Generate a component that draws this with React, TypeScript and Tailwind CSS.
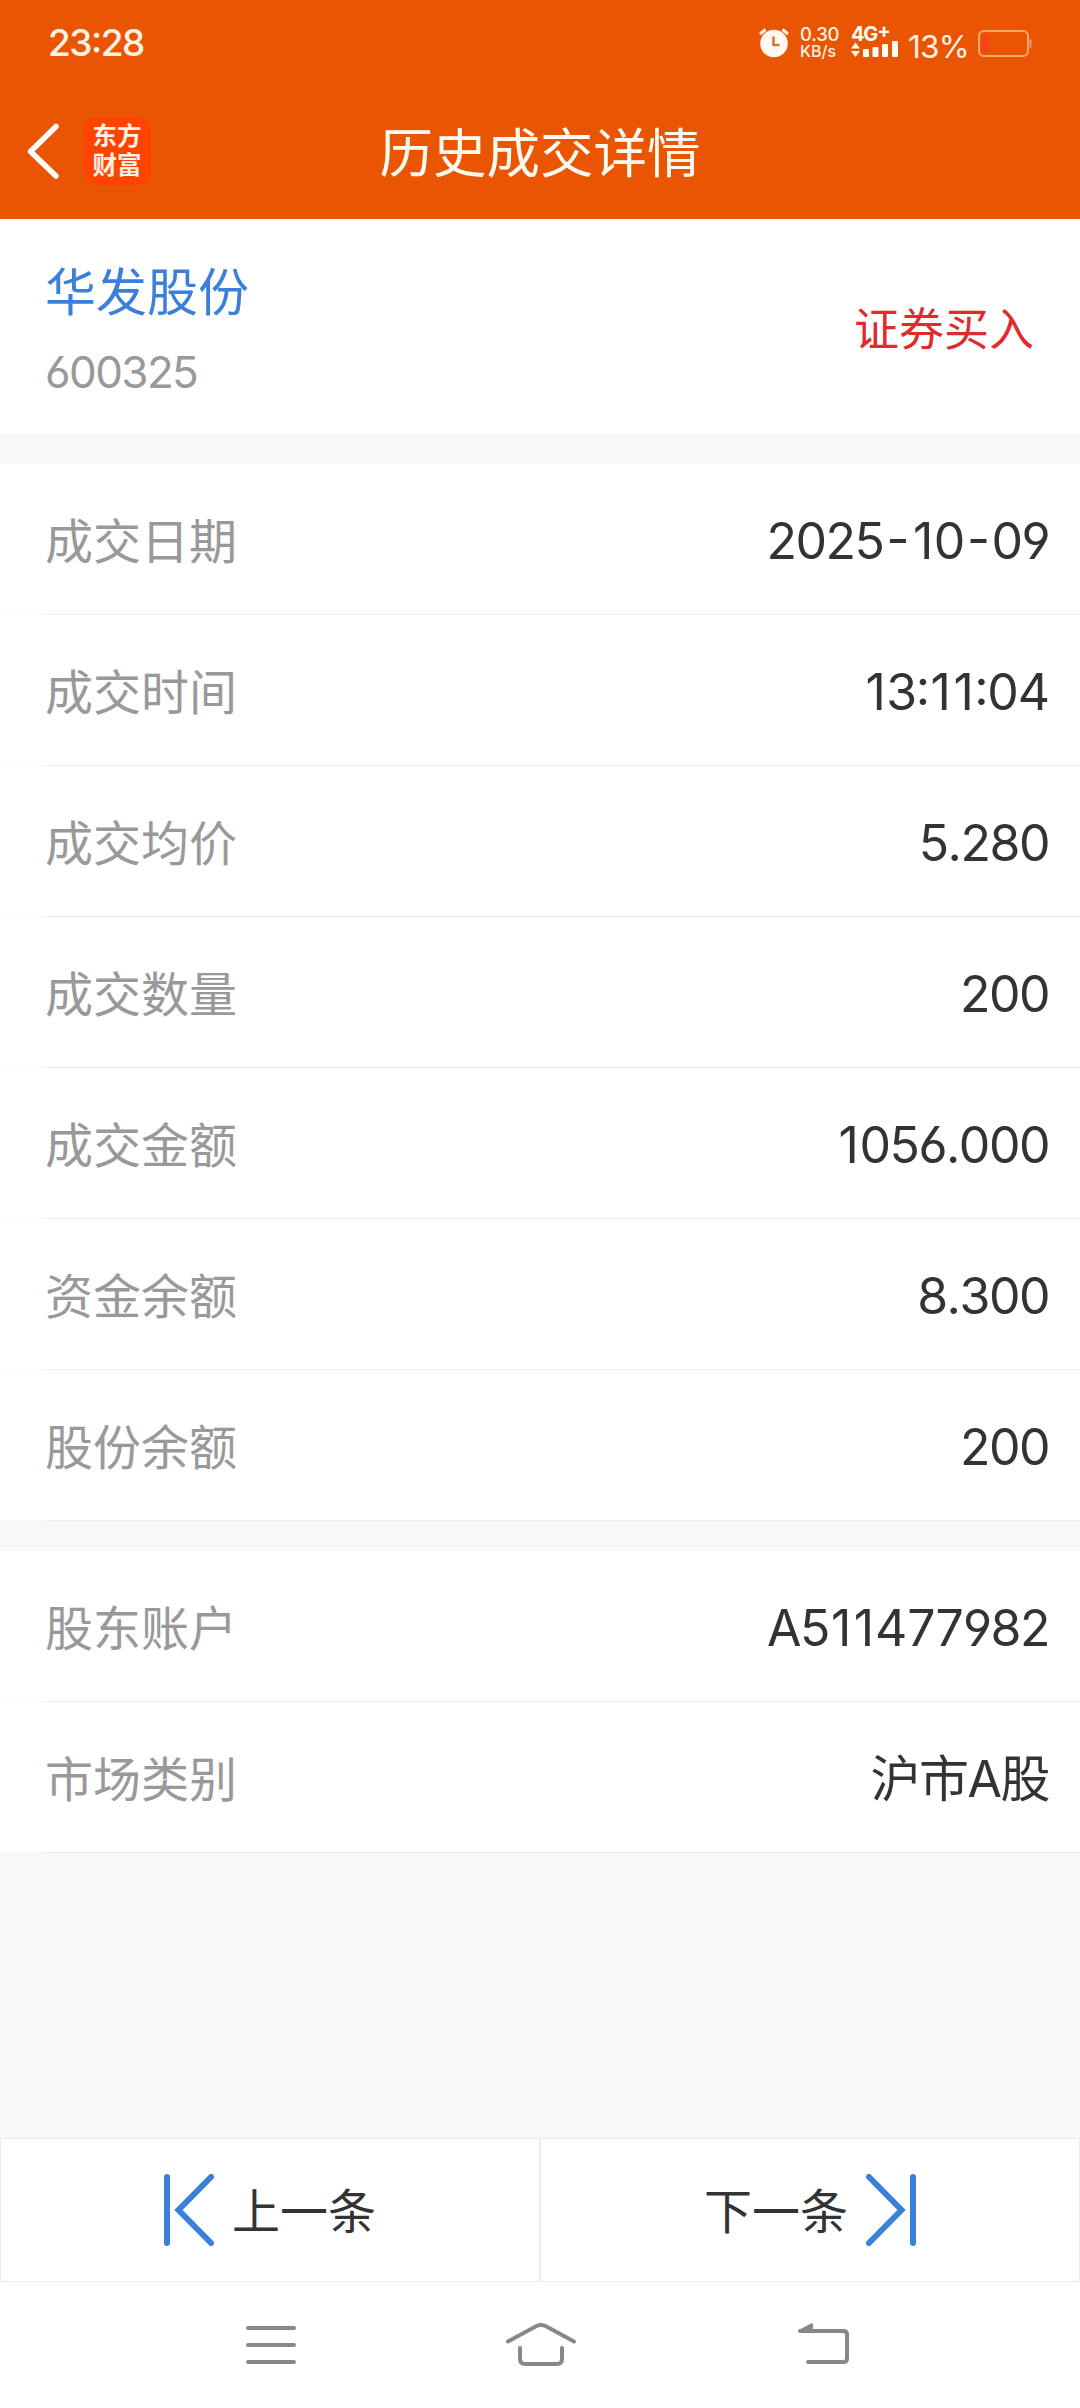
const tradeRows = [
  { label: "成交日期", value: "2025-10-09" },
  { label: "成交时间", value: "13:11:04" },
  { label: "成交均价", value: "5.280" },
  { label: "成交数量", value: "200" },
  { label: "成交金额", value: "1056.000" },
  { label: "资金余额", value: "8.300" },
  { label: "股份余额", value: "200" },
];

const accountRows = [
  { label: "股东账户", value: "A511477982" },
  { label: "市场类别", value: "沪市A股" },
];

const glyphPadding: Record<string, string> = {
  "1": "px-[2px]",
  "4": "px-[0.5px]",
  "7": "px-[0.75px]",
  "-": "px-[3px]",
};

function StatusBar() {
  return (
    <div className="flex h-[83px] items-start justify-between pr-12 pl-12 text-[#fff3e4]">
      <span className="mt-[24px] text-[37px] leading-[37px] font-medium tracking-[-1.5px]">
        23:28
      </span>
      <div className="flex items-start">
        <svg className="mt-[28px]" width="30" height="30" viewBox="0 0 30 30" fill="none">
          <circle cx="15" cy="15.5" r="13.8" fill="#fff9f0" />
          <path d="M1 6 6.500 1.500M29 6 23.500 1.500" stroke="#fff9f0" strokeWidth="3" />
          <path d="M14.500 8.500v8.500h6" stroke="#cf7a3c" strokeWidth="2.600" />
        </svg>
        <div className="mt-[25px] ml-[11px] flex w-[41px] flex-col font-medium">
          <span className="text-[18.500px] leading-[18px] tracking-[-0.2px]">0.30</span>
          <span className="text-[16px] leading-[16px]">KB/s</span>
        </div>
        <div className="mt-[26px] ml-[10px] flex w-[49px] flex-col text-[#fffaf2]">
          <span className="h-[16px] text-[20px] leading-[17px] font-bold tracking-[-1.2px]">
            4G<span className="relative top-[-2px]">+</span>
          </span>
          <svg
            className="overflow-visible"
            width="48"
            height="16"
            viewBox="0 0 48 16"
            fill="currentColor"
          >
            <path d="M0 6.500 4.500 .5 9 6.500zM0 9h9l-4.500 6z" />
            <rect x="12" y="7" width="6" height="8" rx="1" />
            <rect x="21.500" y="5" width="6" height="10" rx="1" />
            <rect x="31" y="2" width="6" height="13" rx="1" />
            <rect x="41" y="-1" width="6" height="16" rx="1" />
          </svg>
        </div>
        <span className="mt-[31px] ml-[8px] w-[63px] text-[31.500px] leading-[31px] tracking-[-0.8px]">
          13%
        </span>
        <svg className="mt-[30px] ml-[7px]" width="54" height="28" viewBox="0 0 54 28" fill="none">
          <rect x="1" y="1" width="49" height="25" rx="5" stroke="#f8a973" strokeWidth="2" />
          <rect x="5" y="5" width="5" height="17" rx="1" fill="#ff3b25" />
          <path d="M52.500 9.500v8" stroke="#f29a62" strokeWidth="2" />
        </svg>
      </div>
    </div>
  );
}

function Header() {
  return (
    <header className="h-[219px] bg-[#ea5504]">
      <StatusBar />
      <div className="grid h-[136px] grid-cols-[1fr_auto_1fr] items-center">
        <div className="flex items-center pl-[27px]">
          <svg width="32" height="56" viewBox="0 0 32 56" fill="none">
            <path
              d="M29 3.500 3.500 28.500 29 53"
              stroke="#ffffff"
              strokeWidth="5.500"
              strokeLinecap="round"
              strokeLinejoin="round"
            />
          </svg>
          <div className="ml-6 flex h-[68px] w-[68px] flex-col items-center justify-center rounded-[14px] bg-[#ff4400] text-[24.500px] leading-[29px] font-bold text-[#fff1e6]">
            <span>东方</span>
            <span>财富</span>
          </div>
        </div>
        <h1 className="pt-[5px] text-[53.500px] leading-[60px] text-[#fffaf0]">历史成交详情</h1>
        <div />
      </div>
    </header>
  );
}

function Value({ text }: { text: string }) {
  return (
    <span className="text-[50px] tracking-[-1.5px] text-[#333333] [font-kerning:none]">
      {text.split("").map((char, i) => (
        <span key={i} className={glyphPadding[char]}>
          {char}
        </span>
      ))}
    </span>
  );
}

function Row({ label, value }: { label: string; value: string }) {
  return (
    <div className="flex h-[151px] bg-white">
      <div className="w-[45px] border-b border-[#f8f8f8]" />
      <div className="flex flex-1 items-center justify-between border-b border-[#ececec] pt-[5px] pr-[31px]">
        <span className="text-[48px] text-[#999999]">{label}</span>
        <Value text={value} />
      </div>
    </div>
  );
}

function Pager() {
  return (
    <div className="grid h-[144px] grid-cols-2 text-[48px] text-[#333333]">
      <button className="flex items-center justify-center gap-[18px] border border-[#ececec] bg-white">
        <svg width="50" height="72" viewBox="0 0 50 72" fill="none" stroke="#3a80da" strokeWidth="6">
          <path d="M3 3v66M47 3 14.500 36 47 69" strokeLinecap="round" />
        </svg>
        <span className="pt-[4px]">上一条</span>
      </button>
      <button className="flex items-center justify-center gap-[18px] border border-[#ececec] bg-white">
        <span className="pt-[4px]">下一条</span>
        <svg width="50" height="72" viewBox="0 0 50 72" fill="none" stroke="#3a80da" strokeWidth="6">
          <path d="M47 3v66M3 3 35.500 36 3 69" strokeLinecap="round" />
        </svg>
      </button>
    </div>
  );
}

function NavBar() {
  return (
    <nav className="flex h-[126px] items-start bg-white pt-[41px] pl-[246px]">
      <svg width="50" height="44" viewBox="0 0 50 44" stroke="#888888" strokeWidth="4">
        <path d="M2 5h46M2 22h46M2 39h46" strokeLinecap="round" />
      </svg>
      <svg
        className="ml-[210px]"
        width="70"
        height="44"
        viewBox="0 0 70 44"
        fill="none"
        stroke="#888888"
        strokeWidth="4"
        strokeLinecap="round"
      >
        <path d="M2 18.500 30 3.200Q35 .8 40 3.200L68 18.500" />
        <path d="M14 25v11q0 5 5 5h32q5 0 5-5V25" />
      </svg>
      <svg className="ml-[222px]" width="52" height="44" viewBox="0 0 52 44" fill="none">
        <path
          d="M2 8h43.500q3.500 0 3.500 3.500v24q0 3.500-3.500 3.500H10"
          stroke="#888888"
          strokeWidth="4"
          strokeLinecap="round"
        />
        <path d="M.5 7 13.500.3q1.500-.5 1.500 1V9H1z" fill="#888888" />
      </svg>
    </nav>
  );
}

export default function App() {
  return (
    <div className="flex h-[2408px] w-[1080px] flex-col bg-[#f7f8fa] font-[Inter,'Noto_Sans_CJK_SC',sans-serif] [font-feature-settings:'cv03','cv04','case']">
      <Header />
      <section className="flex h-[215px] items-center justify-between bg-white pt-[6px] pr-[46px] pl-[45px]">
        <div className="flex flex-col">
          <span className="text-[51px] leading-[72px] text-[#3a80da]">华发股份</span>
          <span className="mt-[13px] text-[44px] leading-[60px] tracking-[-1.600px] text-[#999999]">
            600325
          </span>
        </div>
        <span className="text-[45px] text-[#e02b2b]">证券买入</span>
      </section>
      <section className="mt-[30px]">
        {tradeRows.map((row) => (
          <Row key={row.label} {...row} />
        ))}
      </section>
      <section className="mt-[30px]">
        {accountRows.map((row) => (
          <Row key={row.label} {...row} />
        ))}
      </section>
      <footer className="mt-auto">
        <Pager />
        <NavBar />
      </footer>
    </div>
  );
}
